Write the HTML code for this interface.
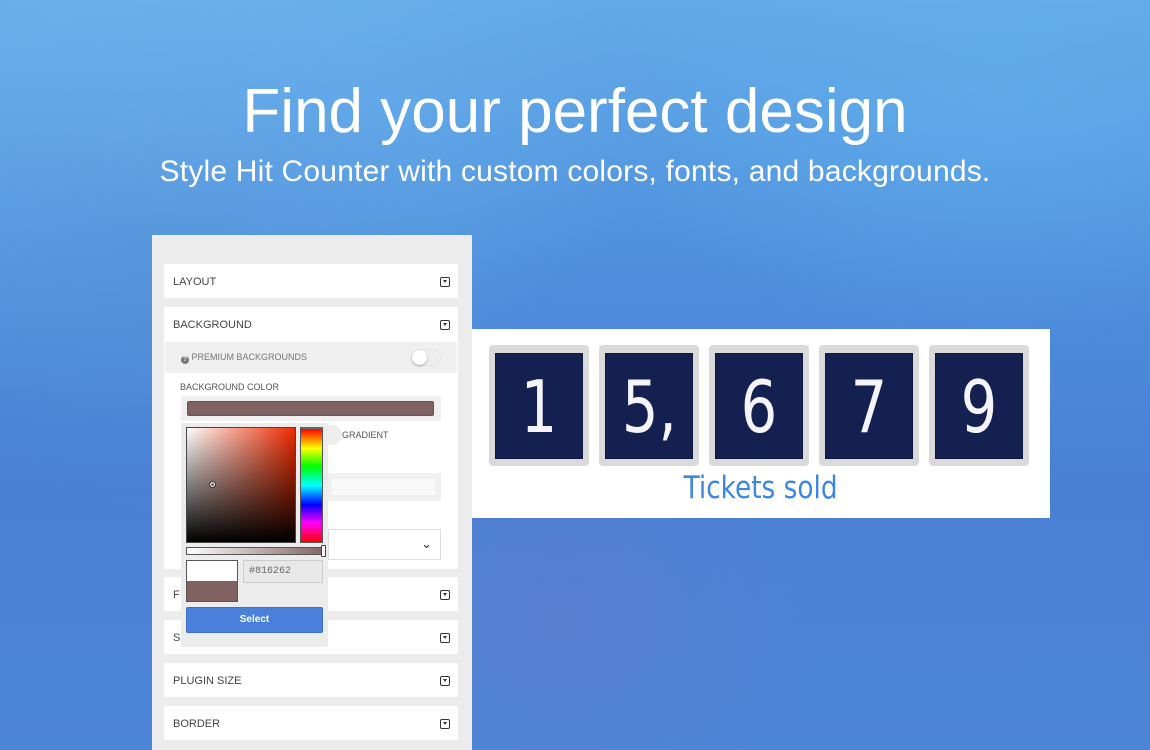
<!DOCTYPE html>
<html><head><style>
*{margin:0;padding:0;box-sizing:border-box}
body{width:1150px;height:750px;overflow:hidden;position:relative;font-family:"Liberation Sans",sans-serif;
background:radial-gradient(ellipse 300px 260px at 160px 260px,rgba(80,140,210,.45),transparent),radial-gradient(ellipse 500px 300px at 150px 120px,rgba(120,190,245,.5),transparent),radial-gradient(ellipse 400px 250px at 1000px 100px,rgba(100,180,240,.5),transparent),radial-gradient(ellipse 260px 200px at 560px 620px,rgba(110,120,200,.35),transparent),linear-gradient(180deg,#62aae8 0%,#4e8fdc 35%,#4a80d4 65%,#4d85d6 100%)}
.abs{position:absolute}
h1{position:absolute;top:76px;left:0;width:1150px;text-align:center;color:#fff;font-weight:normal;font-size:62px}
h2{position:absolute;top:155px;left:0;width:1150px;text-align:center;color:#fff;font-weight:normal;font-size:30px;letter-spacing:.2px}
.panel{left:152px;top:235px;width:320px;height:515px;background:#ececec}
.card{position:absolute;left:12px;width:294px;height:34px;background:#fff;border-radius:2px;font-size:11px;color:#444;padding:12px 0 0 9px}
.ic{position:absolute;right:8px;top:13px;width:10px;height:10px;border:1.5px solid #333;border-radius:2px}
.ic:after{content:"";position:absolute;left:1.5px;top:2px;border-left:2.5px solid transparent;border-right:2.5px solid transparent;border-top:3px solid #333}
.digit{top:345px;width:100px;height:121px;background:#dadada;border-radius:4px}
.digit div{position:absolute;left:6px;top:8px;width:88px;height:106px;background:#142050;border:1px solid #0d1740;color:#f4f4fa;font-family:"DejaVu Sans",sans-serif;font-size:72px;text-align:center;line-height:106px}
.digit span{display:inline-block;transform:scaleX(.8)}
</style></head><body>
<h1>Find your perfect design</h1>
<h2>Style Hit Counter with custom colors, fonts, and backgrounds.</h2>

<div class="abs" style="left:472px;top:329px;width:578px;height:189px;background:#fff"></div>
<div class="abs digit" style="left:489px"><div><span>1</span></div></div>
<div class="abs digit" style="left:599px"><div><span>5,</span></div></div>
<div class="abs digit" style="left:709px"><div><span>6</span></div></div>
<div class="abs digit" style="left:819px"><div><span>7</span></div></div>
<div class="abs digit" style="left:929px"><div><span>9</span></div></div>
<div class="abs" style="left:472px;top:470px;width:578px;text-align:center;color:#3d87e0;font-family:'DejaVu Sans',sans-serif;font-size:31px"><span style="display:inline-block;transform:scaleX(.85)">Tickets sold</span></div>

<div class="abs panel">
 <div class="card" style="top:29px">LAYOUT<span class="ic"></span></div>
 <div class="card" style="top:72px;height:262px">BACKGROUND<span class="ic"></span>
  <div class="abs" style="left:1px;top:35px;width:292px;height:31px;background:#efefef;font-size:9px;color:#777;padding:10px 0 0 16px"><span style="display:inline-block;width:8px;height:8px;border-radius:50%;background:#777;color:#efefef;font-size:7px;text-align:center;line-height:8px;font-weight:bold;vertical-align:-1px">?</span> PREMIUM BACKGROUNDS
   <div class="abs" style="right:16px;top:7px;width:30px;height:17px;border-radius:9px;background:#eee;border:1px solid #e4e4e4"><div class="abs" style="left:0;top:0;width:15px;height:15px;border-radius:50%;background:#fff;box-shadow:0 1px 2px rgba(0,0,0,.3)"></div></div>
  </div>
  <div class="abs" style="left:16px;top:75px;font-size:9px;color:#555">BACKGROUND COLOR</div>
  <div class="abs" style="left:17px;top:89px;width:260px;height:25px;background:#f0f0f0"><div class="abs" style="left:6px;top:5px;width:247px;height:15px;background:#816262;border-radius:2px;border:1px solid #6d5252"></div></div>
  <div class="abs" style="left:164px;top:118px;width:14px;height:20px;border-radius:0 10px 10px 0;background:#eee"></div>
  <div class="abs" style="left:178px;top:123px;font-size:9px;color:#555">GRADIENT</div>
  <div class="abs" style="left:164px;top:166px;width:113px;height:28px;background:#f0f0f0"><div class="abs" style="left:4px;top:6px;width:103px;height:16px;background:#f8f8f8"></div></div>
  <div class="abs" style="left:164px;top:222px;width:113px;height:31px;background:#fff;border:1px solid #ddd;font-size:13px;color:#333;text-align:right;padding:6px 8px 0 0">⌄</div>
 </div>
 <div class="card" style="top:342px">F<span class="ic"></span></div>
 <div class="card" style="top:385px">S<span class="ic"></span></div>
 <div class="card" style="top:428px">PLUGIN SIZE<span class="ic"></span></div>
 <div class="card" style="top:471px">BORDER<span class="ic"></span></div>
</div>

<div class="abs" style="left:181px;top:423px;width:147px;height:224px;background:#ececec;border-radius:2px">
 <div class="abs" style="left:5px;top:4px;width:110px;height:116px;border:1px solid #444;background:linear-gradient(to top,#000,transparent),linear-gradient(to right,#fff,#ee2a00)"></div>
 <div class="abs" style="left:119px;top:4px;width:23px;height:116px;border:1px solid #555;border-top:2px solid #666;background:linear-gradient(#f00,#ff0 17%,#0f0 33%,#0ff 50%,#00f 67%,#f0f 83%,#f00)"></div>
 <div class="abs" style="left:29px;top:59px;width:5px;height:5px;border:1px solid #fff;border-radius:50%;outline:1px solid #333"></div>
 <div class="abs" style="left:5px;top:124px;width:140px;height:8px;border:1px solid #555;background:linear-gradient(to right,#fff,#816262)"></div>
 <div class="abs" style="left:140px;top:122px;width:5px;height:12px;border:1px solid #444;background:#fff;border-radius:1px"></div>
 <div class="abs" style="left:5px;top:137px;width:52px;height:42px;border:1px solid #555;background:linear-gradient(#fff 50%,#816262 50%)"></div>
 <div class="abs" style="left:62px;top:137px;width:80px;height:23px;border:1px solid #ccc;background:#e8e8e8;font-family:'Liberation Mono',monospace;font-size:10px;color:#666;padding:5px 0 0 5px">#816262</div>
 <div class="abs" style="left:5px;top:184px;width:137px;height:26px;background:#4a80dc;border:1px solid #3d6fc8;border-radius:2px;color:#fff;font-size:10px;font-weight:bold;text-align:center;line-height:24px">Select</div>
</div>
</body></html>
